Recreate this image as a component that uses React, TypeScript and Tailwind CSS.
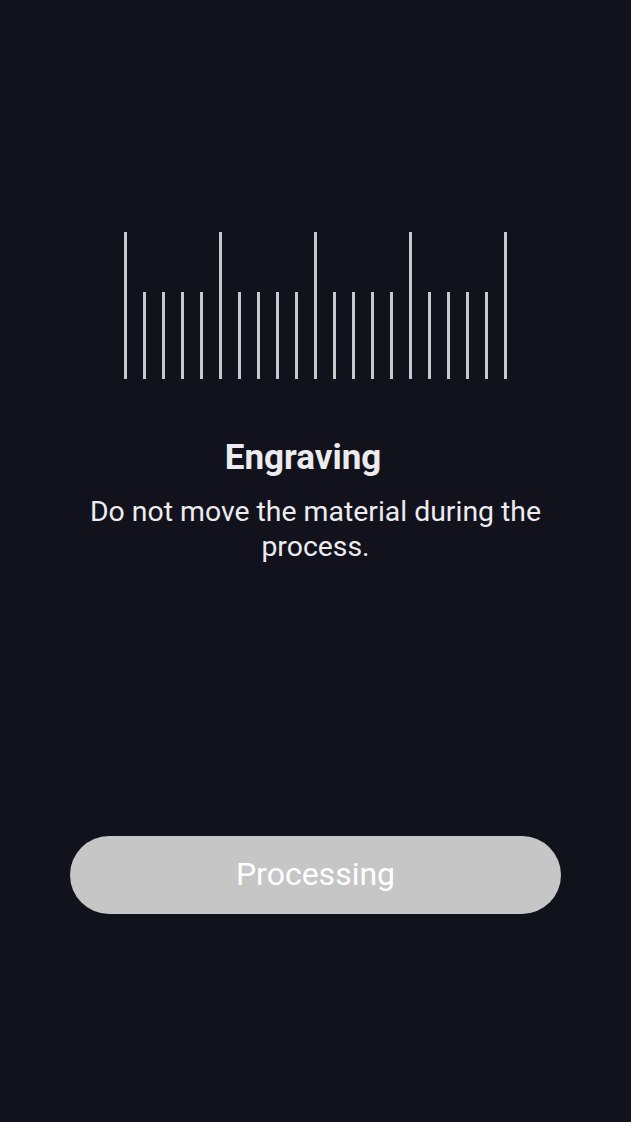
const bars = Array.from({ length: 21 }, (_, i) => i % 5 === 0);

export default function App() {
  return (
    <div className="min-h-[1122px] w-full bg-[#12121d] flex flex-col items-center font-['Roboto',sans-serif]">
      <div className="mt-[231px] flex items-end gap-4 h-[148px]">
        {bars.map((tall, i) => (
          <div key={i} className={`w-[3px] bg-[#c9c9cd] ${tall ? "h-[147px]" : "h-[87px]"}`} />
        ))}
      </div>
      <h1 className="mt-[59px] pr-[25px] text-[35px] leading-[40px] font-bold text-[#ececef]">Engraving</h1>
      <p className="mt-[16px] w-[480px] text-center text-[28.4px] leading-[35px] text-[#ececef]">
        Do not move the material during the process.
      </p>
      <button className="mt-[272px] w-[491px] h-[78px] pb-[3px] rounded-full bg-[#c6c6c6] text-white text-[32px]">
        Processing
      </button>
    </div>
  );
}
